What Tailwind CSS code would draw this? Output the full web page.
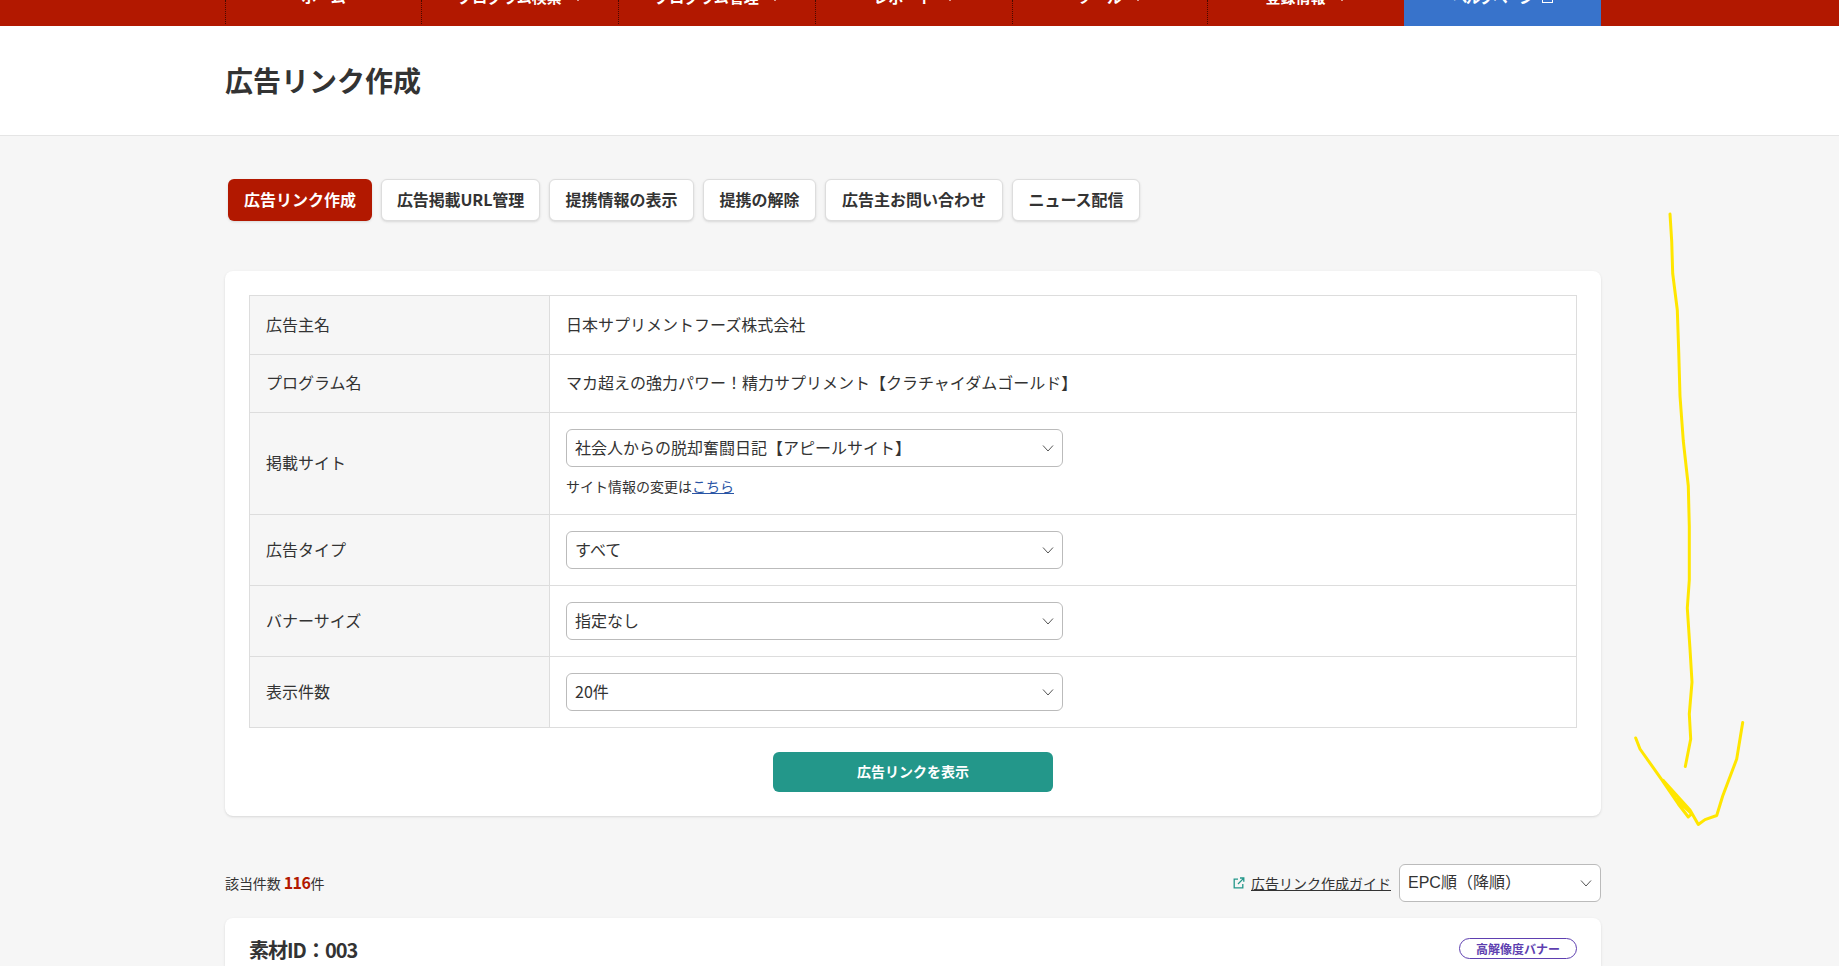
<!DOCTYPE html>
<html lang="ja">
<head>
    <meta charset="UTF-8">
    <title>広告リンク作成</title>
    <script src="https://cdn.jsdelivr.net/npm/@tailwindcss/browser@4"></script>
</head>
<body class="bg-[#f6f6f6] text-[#333] font-['Noto_Sans_CJK_JP','Noto_Sans',sans-serif] h-[966px] overflow-hidden">
    <!-- page is scrolled, only the bottom of the nav shows -->
    <nav class="bg-[#b21800] h-[26px] overflow-hidden">
        <ul class="w-[1376px] ml-[225px] flex h-[26px] text-white text-[15px] font-bold leading-none">
            <li class="w-[196px] h-[24px] border-l border-dotted border-black/60 flex justify-center items-start">
                <a class="-mt-[11px] flex items-end">ホーム</a>
            </li>
            <li class="w-[197px] h-[24px] border-l border-dotted border-black/60 flex justify-center items-start">
                <a class="-mt-[11px] flex items-end">プログラム検索<svg class="w-[10px] h-[6px] ml-[11px] mb-[3px]" viewBox="0 0 10 6" fill="none" stroke="currentColor" stroke-width="1.5"><path d="M1 0l4 5 4-5"/></svg></a>
            </li>
            <li class="w-[197px] h-[24px] border-l border-dotted border-black/60 flex justify-center items-start">
                <a class="-mt-[11px] flex items-end">プログラム管理<svg class="w-[10px] h-[6px] ml-[11px] mb-[3px]" viewBox="0 0 10 6" fill="none" stroke="currentColor" stroke-width="1.5"><path d="M1 0l4 5 4-5"/></svg></a>
            </li>
            <li class="w-[197px] h-[24px] border-l border-dotted border-black/60 flex justify-center items-start">
                <a class="-mt-[11px] flex items-end">レポート<svg class="w-[10px] h-[6px] ml-[11px] mb-[3px]" viewBox="0 0 10 6" fill="none" stroke="currentColor" stroke-width="1.5"><path d="M1 0l4 5 4-5"/></svg></a>
            </li>
            <li class="w-[195px] h-[24px] border-l border-dotted border-black/60 flex justify-center items-start">
                <a class="-mt-[11px] flex items-end">ツール<svg class="w-[10px] h-[6px] ml-[11px] mb-[3px]" viewBox="0 0 10 6" fill="none" stroke="currentColor" stroke-width="1.5"><path d="M1 0l4 5 4-5"/></svg></a>
            </li>
            <li class="w-[197px] h-[24px] border-l border-dotted border-black/60 flex justify-center items-start">
                <a class="-mt-[11px] flex items-end">登録情報<svg class="w-[10px] h-[6px] ml-[11px] mb-[3px]" viewBox="0 0 10 6" fill="none" stroke="currentColor" stroke-width="1.5"><path d="M1 0l4 5 4-5"/></svg></a>
            </li>
            <li class="w-[197px] h-[26px] bg-[#3873cb] flex justify-center items-start">
                <a class="-mt-[11px] flex items-end"><span class="tracking-[-1.5px]">ヘルプページ</span><span class="w-[11px] h-[11px] ml-[9px] mb-[1px] border-[1.5px] border-white"></span></a>
            </li>
        </ul>
    </nav>

    <header class="bg-white h-[110px] border-b border-[#e5e5e5] flex items-center">
        <h1 class="ml-[225px] text-[28px] font-bold leading-none text-[#333] pb-[1px]">広告リンク作成</h1>
    </header>

    <main class="w-[1376px] ml-[225px]">
        <div class="flex gap-[9px] mt-[43px] pl-[3px] text-[16px] font-bold">
            <a class="w-[144px] h-[42px] pb-[2px] flex justify-center items-center rounded-md bg-[#b21800] text-white shadow-sm">広告リンク作成</a>
            <a class="w-[159px] h-[42px] pb-[2px] flex justify-center items-center rounded-md bg-white border border-[#ddd] shadow-sm tracking-[-0.1px]">広告掲載URL管理</a>
            <a class="w-[145px] h-[42px] pb-[2px] flex justify-center items-center rounded-md bg-white border border-[#ddd] shadow-sm">提携情報の表示</a>
            <a class="w-[113px] h-[42px] pb-[2px] flex justify-center items-center rounded-md bg-white border border-[#ddd] shadow-sm">提携の解除</a>
            <a class="w-[178px] h-[42px] pb-[2px] flex justify-center items-center rounded-md bg-white border border-[#ddd] shadow-sm">広告主お問い合わせ</a>
            <a class="w-[128px] h-[42px] pb-[2px] flex justify-center items-center rounded-md bg-white border border-[#ddd] shadow-sm">ニュース配信</a>
        </div>

        <section class="mt-[50px] bg-white rounded-lg shadow-sm p-6 h-[545px]">
            <table class="w-full border-collapse text-[16px] leading-none">
                <tbody>
                    <tr class="h-[59px]">
                        <th class="w-[300px] bg-[#f6f6f6] border border-[#ddd] font-normal text-left pl-4 pb-[3px]">広告主名</th>
                        <td class="border border-[#ddd] pl-4 pb-[3px]">日本サプリメントフーズ株式会社</td>
                    </tr>
                    <tr class="h-[58px]">
                        <th class="bg-[#f6f6f6] border border-[#ddd] font-normal text-left pl-4 pb-[3px]">プログラム名</th>
                        <td class="border border-[#ddd] pl-4 pb-[3px]">マカ超えの強力パワー！精力サプリメント【クラチャイダムゴールド】</td>
                    </tr>
                    <tr class="h-[102px]">
                        <th class="bg-[#f6f6f6] border border-[#ddd] font-normal text-left pl-4 pb-[3px]">掲載サイト</th>
                        <td class="border border-[#ddd] pl-4 pt-4 align-top">
                            <div class="w-[497px] h-[38px] border border-[#bbb] rounded-md pl-2 pr-2 flex items-center justify-between">
                                <span class="pb-[3px]">社会人からの脱却奮闘日記【アピールサイト】</span>
                                <svg class="w-3 h-3 text-[#555]" viewBox="0 0 12 12" fill="none" stroke="currentColor"><path d="M1 3.5l5 5.5 5-5.5"/></svg>
                            </div>
                            <p class="mt-[12px] text-[14px]">サイト情報の変更は<a class="text-[#2a55a5] underline">こちら</a></p>
                        </td>
                    </tr>
                    <tr class="h-[71px]">
                        <th class="bg-[#f6f6f6] border border-[#ddd] font-normal text-left pl-4 pb-[3px]">広告タイプ</th>
                        <td class="border border-[#ddd] pl-4">
                            <div class="w-[497px] h-[38px] border border-[#bbb] rounded-md pl-2 pr-2 flex items-center justify-between">
                                <span class="pb-[3px]">すべて</span>
                                <svg class="w-3 h-3 text-[#555]" viewBox="0 0 12 12" fill="none" stroke="currentColor"><path d="M1 3.5l5 5.5 5-5.5"/></svg>
                            </div>
                        </td>
                    </tr>
                    <tr class="h-[71px]">
                        <th class="bg-[#f6f6f6] border border-[#ddd] font-normal text-left pl-4 pb-[3px]">バナーサイズ</th>
                        <td class="border border-[#ddd] pl-4">
                            <div class="w-[497px] h-[38px] border border-[#bbb] rounded-md pl-2 pr-2 flex items-center justify-between">
                                <span class="pb-[3px]">指定なし</span>
                                <svg class="w-3 h-3 text-[#555]" viewBox="0 0 12 12" fill="none" stroke="currentColor"><path d="M1 3.5l5 5.5 5-5.5"/></svg>
                            </div>
                        </td>
                    </tr>
                    <tr class="h-[71px]">
                        <th class="bg-[#f6f6f6] border border-[#ddd] font-normal text-left pl-4 pb-[3px]">表示件数</th>
                        <td class="border border-[#ddd] pl-4">
                            <div class="w-[497px] h-[38px] border border-[#bbb] rounded-md pl-2 pr-2 flex items-center justify-between">
                                <span class="pb-[3px]">20件</span>
                                <svg class="w-3 h-3 text-[#555]" viewBox="0 0 12 12" fill="none" stroke="currentColor"><path d="M1 3.5l5 5.5 5-5.5"/></svg>
                            </div>
                        </td>
                    </tr>
                </tbody>
            </table>
            <button class="block mx-auto mt-6 w-[280px] h-10 rounded-md bg-[#23978a] text-white text-[14px] font-bold pb-[2px]">広告リンクを表示</button>
        </section>

        <div class="flex items-center justify-between mt-[48px] h-[38px]">
            <p class="text-[14px] leading-none tracking-[-0.1px] pb-[2px]">該当件数 <b class="text-[#b21800] text-[16px] tracking-[-0.5px]">116</b>件</p>
            <div class="flex items-center gap-2">
                <a class="flex items-center gap-[6px] text-[14px]">
                    <svg class="w-3 h-3 text-[#23978a]" viewBox="0 0 12 12" fill="none" stroke="currentColor" stroke-width="1.3"><path d="M5 2.2H1.2v8.6h8.6V7M5 7l5.6-5.6M7 1h3.8v3.8"/></svg>
                    <span class="underline">広告リンク作成ガイド</span>
                </a>
                <div class="w-[202px] h-[38px] bg-white border border-[#bbb] rounded-md pl-2 pr-2 flex items-center justify-between text-[16px] font-['Liberation_Sans','Noto_Sans_CJK_JP',sans-serif]">
                    <span class="pb-[1px]">EPC順（降順）</span>
                    <svg class="w-3 h-3 text-[#555]" viewBox="0 0 12 12" fill="none" stroke="currentColor"><path d="M1 3.5l5 5.5 5-5.5"/></svg>
                </div>
            </div>
        </div>

        <section class="mt-[16px] bg-white rounded-t-lg shadow-sm h-[48px] px-6 pt-5 flex justify-between items-start">
            <h2 class="text-[20px] font-bold leading-none mt-[2px] tracking-[-1px]">素材ID：003</h2>
            <span class="h-[21px] w-[118px] justify-center rounded-full border border-[#5e3fb0] text-[#5e3fb0] text-[12px] font-bold flex items-center">高解像度バナー</span>
        </section>
    </main>

    <!-- hand-drawn annotation over the page -->
    <svg class="absolute left-0 top-0 pointer-events-none" width="1839" height="966" fill="none" stroke="#ffe600" stroke-width="3" stroke-linecap="round" stroke-linejoin="round">
        <path d="M1670 214L1671.7 241L1672.7 273.5L1677.3 310L1678.7 351L1680 396L1683.3 441L1688.3 486L1689.3 526.5L1689.3 580L1687.3 608L1690 649L1692 682L1689.3 714L1690.7 739L1685.3 766.5"/>
        <path d="M1635.7 738L1640 749L1661.7 779.6L1678.3 804L1688.3 817L1691.7 814L1675 798L1663.3 780.4L1690 810L1698.3 824.5L1705 819.6L1716.7 815.5L1722.7 796L1736.7 759L1742.7 722.5"/>
    </svg>
</body>
</html>
